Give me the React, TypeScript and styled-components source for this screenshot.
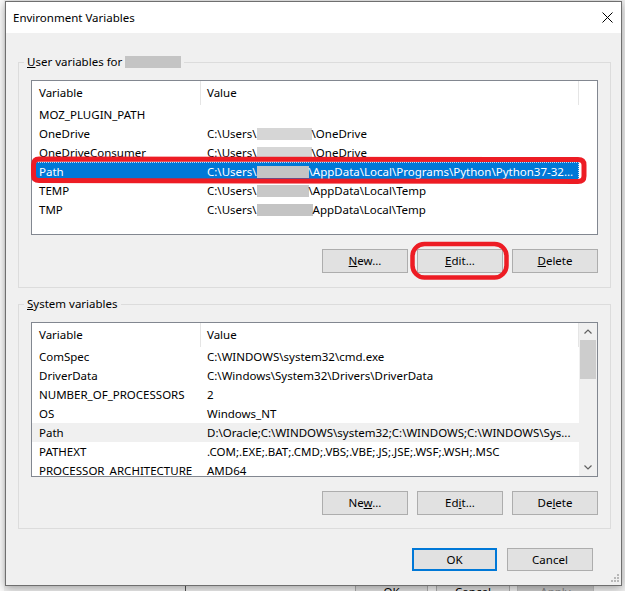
import React from 'react';
import styled, { createGlobalStyle } from 'styled-components';

const Global = createGlobalStyle`
  html, body { margin: 0; padding: 0; background: #f0f0f0; }
  body {
    font-family: 'Noto Sans', 'Open Sans', 'Liberation Sans', sans-serif;
    font-size: 11.5px;
    color: #000;
  }
  * { box-sizing: border-box; }
`;

const Desktop = styled.div`
  width: 625px;
  height: 591px;
  overflow: hidden;
  padding: 1px 3px 0 5px;
  background: linear-gradient(to right, #fbfbfb 0, #fbfbfb 4px, #f0f0f0 4px);
`;

const Dialog = styled.div`
  position: relative;
  z-index: 1;
  width: 617px;
  height: 585px;
  border: 1px solid #6f6f6f;
  background: #f0f0f0;
  box-shadow: 0 2px 9px rgba(0, 0, 0, 0.35);
  display: flex;
  flex-direction: column;
`;

const TitleBar = styled.div`
  height: 31px;
  flex: none;
  background: #fff;
  display: flex;
  align-items: center;
  justify-content: space-between;
  padding-left: 7px;
  font-size: 11.5px;
`;

const CloseButton = styled.div`
  width: 28px;
  height: 31px;
  display: flex;
  align-items: center;
  justify-content: center;
`;

const Body = styled.div`
  flex: 1;
  padding: 21px 10px 0 12px;
  display: flex;
  flex-direction: column;
`;

const Group = styled.fieldset<{ $bottom: number; $top?: number }>`
  margin: ${(p) => p.$top ?? 0}px 0 0 0;
  min-width: 0;
  border: 1px solid #dcdcdc;
  padding: 10px 12px ${(p) => p.$bottom}px 12px;
`;

const Legend = styled.legend`
  margin-left: -7px;
  padding: 0 3px;
  line-height: 16px;
  font-size: 11.5px;
`;

const Redact = styled.span<{ $w: number; $tone?: string }>`
  display: inline-block;
  width: ${(p) => p.$w}px;
  height: 12px;
  background: ${(p) => p.$tone ?? '#c4c4c4'};
  vertical-align: -2px;
`;

const ListBox = styled.div`
  height: 155px;
  border: 1px solid #828790;
  background: #fff;
  display: flex;
  overflow: hidden;
`;

const ListContent = styled.div`
  width: 547px;
  flex: none;
  overflow: hidden;
`;

const HeaderRow = styled.div`
  display: grid;
  grid-template-columns: 169px 378px;
  height: 24px;
`;

const HeaderCell = styled.div<{ $pad: number }>`
  border-right: 1px solid #e5e5e5;
  padding-left: ${(p) => p.$pad}px;
  line-height: 24px;
  white-space: nowrap;
`;

const Row = styled.div<{ $state?: 'selected' | 'inactive' }>`
  display: grid;
  grid-template-columns: 169px 377px;
  height: 19px;
  line-height: 19px;
  white-space: nowrap;
  background: ${(p) =>
    p.$state === 'selected' ? '#0078d7' : p.$state === 'inactive' ? '#f0f0f0' : 'transparent'};
  color: ${(p) => (p.$state === 'selected' ? '#fff' : '#000')};
  outline: ${(p) => (p.$state === 'selected' ? '1px dotted rgba(255,255,255,0.75)' : 'none')};
  outline-offset: -1px;
`;

const Cell = styled.div<{ $pad: number }>`
  padding-left: ${(p) => p.$pad}px;
  overflow: hidden;
`;

const ScrollBar = styled.div`
  width: 18px;
  flex: none;
  background: #f0f0f0;
  display: flex;
  flex-direction: column;
`;

const ScrollArrow = styled.div`
  height: 17px;
  display: flex;
  align-items: center;
  justify-content: center;
`;

const ScrollTrack = styled.div`
  flex: 1;
  padding: 0 1px;
`;

const ScrollThumb = styled.div`
  height: 39px;
  background: #cdcdcd;
`;

const ButtonRow = styled.div`
  display: flex;
  justify-content: flex-end;
  gap: 9px;
  margin-top: 14px;
`;

const Button = styled.button<{ $kind?: 'default' | 'footer' }>`
  width: ${(p) => (p.$kind === 'default' ? 85 : 86)}px;
  height: ${(p) => (p.$kind ? 23 : 24)}px;
  padding: 0;
  margin: 0;
  background: #e1e1e1;
  border: ${(p) => (p.$kind === 'default' ? '2px solid #0078d7' : '1px solid #adadad')};
  font-family: inherit;
  font-size: 11.5px;
  color: #000;
  line-height: 1;
`;

const Footer = styled.div`
  display: flex;
  justify-content: flex-end;
  gap: 10px;
  margin-top: 19px;
  padding-right: 18px;
`;

const Annotations = styled.svg`
  position: absolute;
  left: 0;
  top: 0;
  pointer-events: none;
`;

const Grip = styled.svg`
  position: absolute;
  right: 2px;
  bottom: 3px;
`;

const BehindStrip = styled.div`
  height: 5px;
  overflow: hidden;
  display: flex;
  align-items: flex-start;
`;

const BehindPane = styled.div`
  width: 181px;
  height: 20px;
  border-right: 1px solid #555;
  background: #f0f0f0;
  flex: none;
`;

const BehindButton = styled.div<{ $w: number; $ml: number; $disabled?: boolean }>`
  width: ${(p) => p.$w}px;
  height: 23px;
  margin-left: ${(p) => p.$ml}px;
  margin-top: -6px;
  flex: none;
  border: 1px solid ${(p) => (p.$disabled ? '#bfbfbf' : '#adadad')};
  background: ${(p) => (p.$disabled ? '#cccccc' : '#e1e1e1')};
  color: ${(p) => (p.$disabled ? '#838383' : '#000')};
  text-align: center;
  line-height: 21px;
`;

type ListRow = { name: string; pre?: string; redact?: number; tone?: string; post: string; state?: 'selected' | 'inactive' };

const userRows: ListRow[] = [
  { name: 'MOZ_PLUGIN_PATH', post: '' },
  { name: 'OneDrive', pre: 'C:\\Users\\', redact: 55, tone: '#d6d6d6', post: '\\OneDrive' },
  { name: 'OneDriveConsumer', pre: 'C:\\Users\\', redact: 55, tone: '#d6d6d6', post: '\\OneDrive' },
  {
    name: 'Path',
    pre: 'C:\\Users\\',
    redact: 52,
    tone: '#c4c4c4',
    post: '\\AppData\\Local\\Programs\\Python\\Python37-32...',
    state: 'selected',
  },
  { name: 'TEMP', pre: 'C:\\Users\\', redact: 52, tone: '#c8c8c8', post: '\\AppData\\Local\\Temp' },
  { name: 'TMP', pre: 'C:\\Users\\', redact: 56, tone: '#c4c4c4', post: 'AppData\\Local\\Temp' },
];

const systemRows: ListRow[] = [
  { name: 'ComSpec', post: 'C:\\WINDOWS\\system32\\cmd.exe' },
  { name: 'DriverData', post: 'C:\\Windows\\System32\\Drivers\\DriverData' },
  { name: 'NUMBER_OF_PROCESSORS', post: '2' },
  { name: 'OS', post: 'Windows_NT' },
  { name: 'Path', post: 'D:\\Oracle;C:\\WINDOWS\\system32;C:\\WINDOWS;C:\\WINDOWS\\Sys...', state: 'inactive' },
  { name: 'PATHEXT', post: '.COM;.EXE;.BAT;.CMD;.VBS;.VBE;.JS;.JSE;.WSF;.WSH;.MSC' },
  { name: 'PROCESSOR_ARCHITECTURE', post: 'AMD64' },
];

const Header = () => (
  <HeaderRow>
    <HeaderCell $pad={7}>Variable</HeaderCell>
    <HeaderCell $pad={6}>Value</HeaderCell>
  </HeaderRow>
);

const Rows = ({ rows }: { rows: ListRow[] }) => (
  <>
    {rows.map((r) => (
      <Row key={r.name} $state={r.state}>
        <Cell $pad={7}>{r.name}</Cell>
        <Cell $pad={6}>
          {r.pre}
          {r.redact ? <Redact $w={r.redact} $tone={r.tone} /> : null}
          {r.post}
        </Cell>
      </Row>
    ))}
  </>
);

const Chevron = ({ up }: { up?: boolean }) => (
  <svg width="8" height="5" viewBox="0 0 8 5">
    <path
      d={up ? 'M0.5 4.5 L4 1 L7.5 4.5' : 'M0.5 0.5 L4 4 L7.5 0.5'}
      fill="none"
      stroke="#606060"
      strokeWidth="1.2"
    />
  </svg>
);

export default function App() {
  return (
    <>
      <Global />
      <Desktop>
        <Dialog>
          <TitleBar>
            <span>Environment Variables</span>
            <CloseButton>
              <svg width="11" height="11" viewBox="0 0 11 11">
                <path d="M0.5 0.5 L10.5 10.5 M10.5 0.5 L0.5 10.5" stroke="#000" strokeWidth="1" />
              </svg>
            </CloseButton>
          </TitleBar>
          <Body>
            <Group $bottom={14}>
              <Legend>
                <u>U</u>ser variables for <Redact $w={56} />
              </Legend>
              <ListBox>
                <ListContent>
                  <Header />
                  <Rows rows={userRows} />
                </ListContent>
              </ListBox>
              <ButtonRow>
                <Button>
                  <u>N</u>ew...
                </Button>
                <Button>
                  <u>E</u>dit...
                </Button>
                <Button>
                  <u>D</u>elete
                </Button>
              </ButtonRow>
            </Group>
            <Group $bottom={13} $top={8}>
              <Legend>
                <u>S</u>ystem variables
              </Legend>
              <ListBox>
                <ListContent>
                  <Header />
                  <Rows rows={systemRows} />
                </ListContent>
                <ScrollBar>
                  <ScrollArrow>
                    <Chevron up />
                  </ScrollArrow>
                  <ScrollTrack>
                    <ScrollThumb />
                  </ScrollTrack>
                  <ScrollArrow>
                    <Chevron />
                  </ScrollArrow>
                </ScrollBar>
              </ListBox>
              <ButtonRow>
                <Button>
                  Ne<u>w</u>...
                </Button>
                <Button>
                  Ed<u>i</u>t...
                </Button>
                <Button>
                  De<u>l</u>ete
                </Button>
              </ButtonRow>
            </Group>
            <Footer>
              <Button $kind="default">OK</Button>
              <Button $kind="footer">Cancel</Button>
            </Footer>
          </Body>
          <Annotations width="615" height="583" viewBox="0 0 615 583">
            <path
              d="M33 157 L572 157.5 Q578 157.5 578 163 L578 174 Q578 179.5 572 179.5 L33 178.5 Q27.5 178.5 27.5 173 L27.5 163 Q27.5 157 33 157 Z"
              fill="none"
              stroke="#ed1c24"
              strokeWidth="5"
            />
            <rect x="406.5" y="242" width="94" height="33.5" rx="12" fill="none" stroke="#ed1c24" strokeWidth="4.5" />
          </Annotations>
          <Grip width="8" height="8" viewBox="0 0 8 8">
            <rect x="6" y="0" width="2" height="2" fill="#b8b8b8" />
            <rect x="3" y="3" width="2" height="2" fill="#b8b8b8" />
            <rect x="6" y="3" width="2" height="2" fill="#b8b8b8" />
            <rect x="0" y="6" width="2" height="2" fill="#b8b8b8" />
            <rect x="3" y="6" width="2" height="2" fill="#b8b8b8" />
            <rect x="6" y="6" width="2" height="2" fill="#b8b8b8" />
          </Grip>
        </Dialog>
        <BehindStrip>
          <BehindPane />
          <BehindButton $w={73} $ml={169}>
            OK
          </BehindButton>
          <BehindButton $w={74} $ml={8}>
            Cancel
          </BehindButton>
          <BehindButton $w={77} $ml={7} $disabled>
            Apply
          </BehindButton>
        </BehindStrip>
      </Desktop>
    </>
  );
}
